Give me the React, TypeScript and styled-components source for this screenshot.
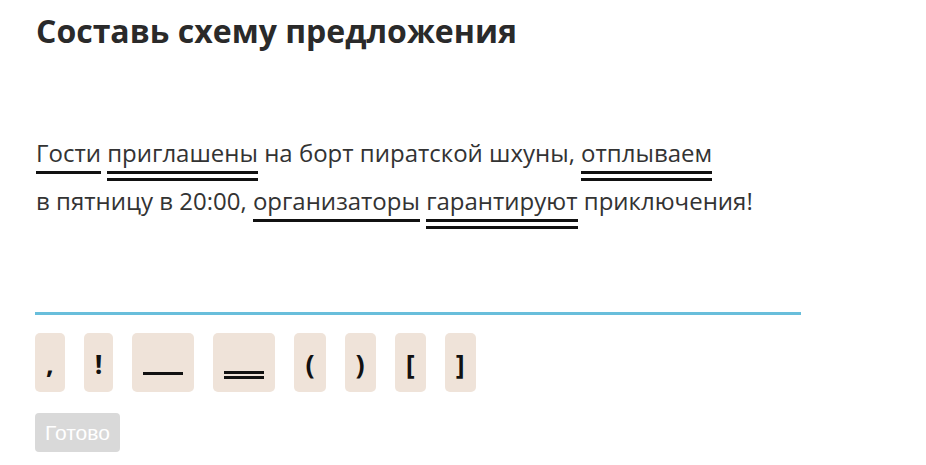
import styled, { createGlobalStyle } from "styled-components";

const GlobalStyle = createGlobalStyle`
  html, body {
    margin: 0;
    padding: 0;
    background: #ffffff;
  }
  body {
    font-family: "Open Sans", "DejaVu Sans", sans-serif;
    color: #333333;
  }
`;

const Page = styled.div`
  width: 926px;
  height: 465px;
  box-sizing: border-box;
  padding: 9px 0 0 35px;
  overflow: hidden;
`;

const Title = styled.h1`
  margin: 0 0 0 1px;
  font-family: "Open Sans", sans-serif;
  font-size: 32px;
  line-height: 44px;
  font-weight: 700;
  color: #2a2a2a;
`;

const Sentence = styled.p`
  margin: 76px 0 0 1px;
  width: 800px;
  font-size: 24px;
  line-height: 48px;
  color: #333333;
`;

const Part = styled.span<{ $lines: 1 | 2 }>`
  padding-bottom: 12px;
  background-repeat: no-repeat;
  background-image: ${({ $lines }) =>
    $lines === 2
      ? "linear-gradient(#111, #111), linear-gradient(#111, #111)"
      : "linear-gradient(#111, #111)"};
  background-size: ${({ $lines }) =>
    $lines === 2 ? "100% 3px, 100% 3px" : "100% 3px"};
  background-position: ${({ $lines }) =>
    $lines === 2 ? "left bottom 7px, left bottom 0" : "left bottom 7px"};
`;

const AnswerZone = styled.div`
  margin-top: 87px;
  width: 766px;
  height: 0;
  border-bottom: 3px solid #68bedb;
`;

const Marks = styled.div`
  display: flex;
  gap: 19px;
  margin-top: 18px;
`;

const Mark = styled.button<{ $wide?: boolean }>`
  display: flex;
  flex-direction: column;
  align-items: center;
  justify-content: flex-end;
  gap: 2px;
  box-sizing: border-box;
  height: 59px;
  min-width: ${({ $wide }) => ($wide ? "60px" : "29px")};
  padding: 0 11px 15px;
  border: none;
  border-radius: 5px;
  background: #efe3d9;
  font-family: "Open Sans", sans-serif;
  font-size: 27px;
  line-height: 27px;
  font-weight: 700;
  color: #111111;
  cursor: pointer;
`;

const Dash = styled.span`
  display: block;
  width: 40px;
  height: 3px;
  background: #111111;
`;

const DoneButton = styled.button`
  margin-top: 21px;
  height: 39px;
  padding: 0 10px;
  border: none;
  border-radius: 4px;
  background: #d9d9d9;
  color: #ffffff;
  font-family: "Liberation Sans", Arial, sans-serif;
  font-size: 21px;
`;

const marks: { id: string; glyph?: string; dashes?: number }[] = [
  { id: "comma", glyph: "," },
  { id: "excl", glyph: "!" },
  { id: "single", dashes: 1 },
  { id: "double", dashes: 2 },
  { id: "lpar", glyph: "(" },
  { id: "rpar", glyph: ")" },
  { id: "lbr", glyph: "[" },
  { id: "rbr", glyph: "]" },
];

const App = () => {
  return (
    <Page>
      <GlobalStyle />
      <Title>Составь схему предложения</Title>
      <Sentence>
        <Part $lines={1}>Гости</Part> <Part $lines={2}>приглашены</Part> на борт
        пиратской шхуны, <Part $lines={2}>отплываем</Part>
        <br />в пятницу в 20:00, <Part $lines={1}>организаторы</Part>{" "}
        <Part $lines={2}>гарантируют</Part> приключения!
      </Sentence>
      <AnswerZone />
      <Marks>
        {marks.map((m) =>
          m.dashes ? (
            <Mark key={m.id} $wide style={{ paddingBottom: m.dashes === 2 ? 13 : 17 }}>
              {Array.from({ length: m.dashes }).map((_, i) => (
                <Dash key={i} />
              ))}
            </Mark>
          ) : (
            <Mark key={m.id}>{m.glyph}</Mark>
          )
        )}
      </Marks>
      <DoneButton>Готово</DoneButton>
    </Page>
  );
};

export default App;
